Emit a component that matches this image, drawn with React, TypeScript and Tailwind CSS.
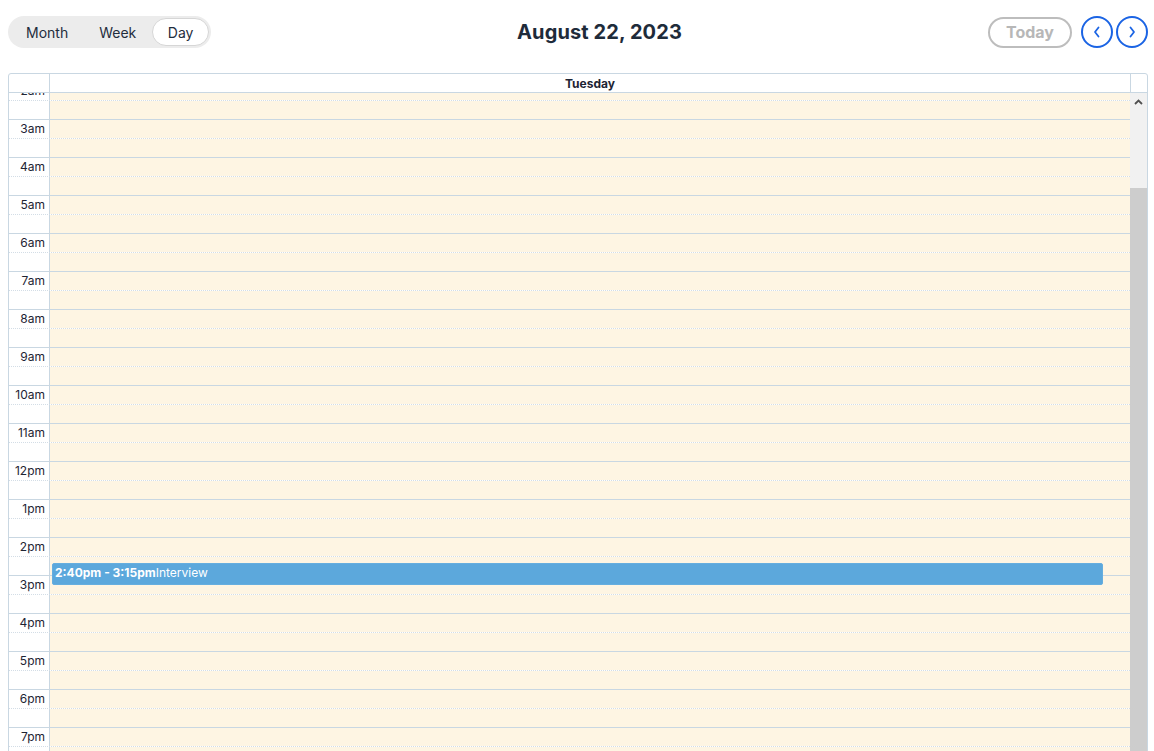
import React from "react";

const hours = [
  "2am","3am","4am","5am","6am","7am","8am","9am","10am","11am","12pm",
  "1pm","2pm","3pm","4pm","5pm","6pm","7pm","8pm",
];

export default function App() {
  return (
    <div className="w-[1154px] h-[751px] overflow-hidden bg-white text-[#1f2d3d]" style={{ fontFamily: "Inter, 'Noto Sans', sans-serif" }}>
      {/* toolbar */}
      <div className="flex items-center justify-between pl-2 pr-[6px] pt-4">
        <div className="flex items-center h-8 w-[203px] rounded-full bg-[#ececec] px-[2px] text-[14px]">
          <div className="pl-4 pr-[15px] leading-8 translate-y-[1px]">Month</div>
          <div className="px-[16px] leading-8 translate-y-[1px]">Week</div>
          <div className="ml-auto flex items-center justify-center h-[28px] w-[59px] rounded-full bg-white border border-[#d6d6d6] pt-[1px]">Day</div>
        </div>
        <div className="text-[20px] font-bold text-[#1e2b3a] tracking-[0.1px]">August 22, 2023</div>
        <div className="flex items-center">
          <div className="flex items-center justify-center h-[31px] w-[84px] rounded-full border-2 border-[#bdbdbd] text-[16px] font-bold text-[#b7b7b7]">Today</div>
          <div className="ml-[9px] flex items-center justify-center h-[32px] w-[32px] rounded-full border-2 border-[#1b64e4]">
            <svg width="10" height="12" viewBox="0 0 10 12"><path d="M6.5 1.5 L3 6 L6.5 10.5" fill="none" stroke="#1b64e4" strokeWidth="1.8" strokeLinecap="round" strokeLinejoin="round" /></svg>
          </div>
          <div className="ml-[3px] flex items-center justify-center h-[32px] w-[32px] rounded-full border-2 border-[#1b64e4]">
            <svg width="10" height="12" viewBox="0 0 10 12"><path d="M3.5 1.5 L7 6 L3.5 10.5" fill="none" stroke="#1b64e4" strokeWidth="1.8" strokeLinecap="round" strokeLinejoin="round" /></svg>
          </div>
        </div>
      </div>

      {/* calendar */}
      <div className="ml-2 w-[1140px] mt-[25px] border border-[#c9d7e2] rounded-t-[3px]">
        {/* header */}
        <div className="flex h-[19px] border-b border-[#c9d7e2]">
          <div className="w-[41px] border-r border-[#c9d7e2]" />
          <div className="flex-1 text-center text-[12px] font-bold leading-[19px] text-[#1e2433]">Tuesday</div>
          <div className="w-[17px] border-l border-[#c9d7e2]" />
        </div>
        {/* body */}
        <div className="flex h-[660px] overflow-hidden">
          <div className="relative flex-1 overflow-hidden">
            <div className="-mt-[12px]">
              {hours.map((h) => (
                <div key={h}>
                  <div className="flex h-[19px] border-t border-[#c9d7e2]">
                    <div className="w-[41px] border-r border-[#c9d7e2] text-right pr-[4px] pt-[2px] text-[12px] leading-[14px] text-[#1e2433]">{h}</div>
                    <div className="flex-1 bg-[#fef5e3]" />
                  </div>
                  <div className="flex h-[19px] border-t border-dotted border-[#d3dde6]">
                    <div className="w-[41px] border-r border-[#c9d7e2]" />
                    <div className="flex-1 bg-[#fef5e3]" />
                  </div>
                </div>
              ))}
            </div>
            <div className="absolute left-[43px] right-[27px] top-[470px] h-[22px] rounded-[2px] bg-[#5ca8dc] border border-[#66aedf] px-[2px] text-[12px] leading-[17px] text-white">
              <span className="font-bold">2:40pm - 3:15pm</span>
              <span>Interview</span>
            </div>
          </div>
          {/* scrollbar */}
          <div className="w-[17px] flex flex-col bg-[#f1f1f1]">
            <div className="h-[17px] flex items-center justify-center">
              <svg width="9" height="6" viewBox="0 0 9 6"><path d="M1 5 L4.5 1.5 L8 5" fill="none" stroke="#505050" strokeWidth="1.8" /></svg>
            </div>
            <div className="h-[78px]" />
            <div className="flex-1 bg-[#cdcdcd]" />
          </div>
        </div>
      </div>
    </div>
  );
}
